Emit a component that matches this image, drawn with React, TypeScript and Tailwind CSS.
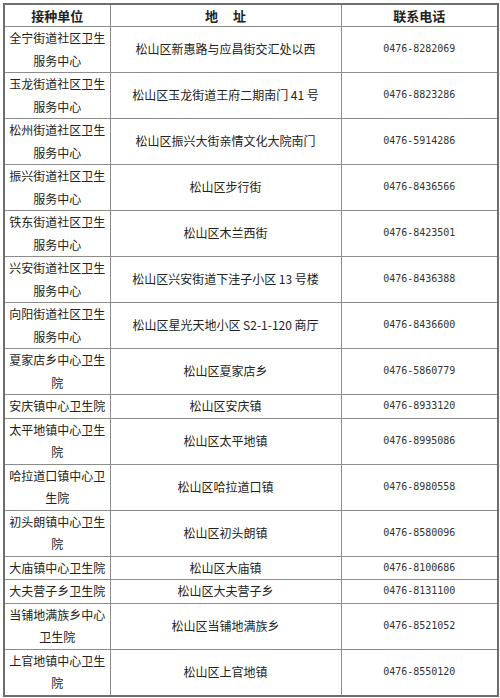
import React from "react";

type Row = { name: string; addr: string; tel: string };

// 接种单位 / 地址 / 联系电话 — the table as printed, one row per unit.
const ROWS: Row[] = [
  { name: "全宁街道社区卫生服务中心", addr: "松山区新惠路与应昌街交汇处以西", tel: "0476-8282069" },
  { name: "玉龙街道社区卫生服务中心", addr: "松山区玉龙街道王府二期南门 41 号", tel: "0476-8823286" },
  { name: "松州街道社区卫生服务中心", addr: "松山区振兴大街亲情文化大院南门", tel: "0476-5914286" },
  { name: "振兴街道社区卫生服务中心", addr: "松山区步行街", tel: "0476-8436566" },
  { name: "铁东街道社区卫生服务中心", addr: "松山区木兰西街", tel: "0476-8423501" },
  { name: "兴安街道社区卫生服务中心", addr: "松山区兴安街道下洼子小区 13 号楼", tel: "0476-8436388" },
  { name: "向阳街道社区卫生服务中心", addr: "松山区星光天地小区 S2-1-120 商厅", tel: "0476-8436600" },
  { name: "夏家店乡中心卫生院", addr: "松山区夏家店乡", tel: "0476-5860779" },
  { name: "安庆镇中心卫生院", addr: "松山区安庆镇", tel: "0476-8933120" },
  { name: "太平地镇中心卫生院", addr: "松山区太平地镇", tel: "0476-8995086" },
  { name: "哈拉道口镇中心卫生院", addr: "松山区哈拉道口镇", tel: "0476-8980558" },
  { name: "初头朗镇中心卫生院", addr: "松山区初头朗镇", tel: "0476-8580096" },
  { name: "大庙镇中心卫生院", addr: "松山区大庙镇", tel: "0476-8100686" },
  { name: "大夫营子乡卫生院", addr: "松山区大夫营子乡", tel: "0476-8131100" },
  { name: "当铺地满族乡中心卫生院", addr: "松山区当铺地满族乡", tel: "0476-8521052" },
  { name: "上官地镇中心卫生院", addr: "松山区上官地镇", tel: "0476-8550120" },
];

const cjk = "font-['SimSun','Noto_Sans_CJK_SC',sans-serif]";

export default function App() {
  return (
    <div className="min-h-[698px] w-[500px] bg-white pl-[3px] pt-[3px]">
      <table className="w-[494px] table-fixed border-collapse border-2 border-[#6e6e6e] text-[#222]">
        <colgroup>
          <col className="w-[106px]" />
          <col className="w-[231px]" />
          <col className="w-[157px]" />
        </colgroup>
        <thead>
          <tr className={`${cjk} text-[13px] font-bold leading-[21px]`}>
            <th className="border border-[#8c8c8c] p-0 text-center">接种单位</th>
            <th className="border border-[#8c8c8c] p-0 text-center">
              地<span className="inline-block w-[15px]" />址
            </th>
            <th className="border border-[#8c8c8c] p-0 text-center">联系电话</th>
          </tr>
        </thead>
        <tbody>
          {ROWS.map((r) => (
            <tr key={r.name}>
              <td
                className={`${cjk} border border-[#8c8c8c] px-[4px] py-0 text-center text-[12px] leading-[22.5px]`}
              >
                {r.name}
              </td>
              <td className={`${cjk} border border-[#8c8c8c] p-0 text-center text-[12px] leading-[22.5px]`}>
                {r.addr}
              </td>
              <td className="border border-[#8c8c8c] p-0 text-center font-['DejaVu_Sans_Mono',monospace] text-[10px] leading-[22.5px] text-[#333]">
                {r.tel}
              </td>
            </tr>
          ))}
        </tbody>
      </table>
    </div>
  );
}
